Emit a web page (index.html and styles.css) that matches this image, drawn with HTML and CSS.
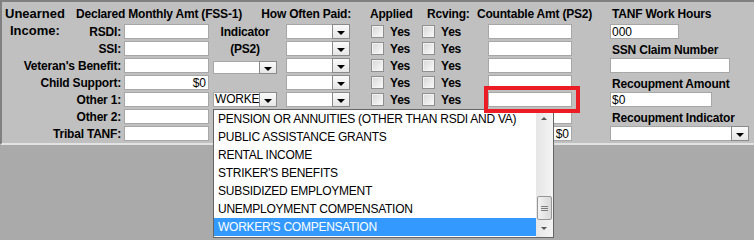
FILE: index.html
```html
<!DOCTYPE html>
<html lang="en">
<head>
  <meta charset="UTF-8">
  <title>Unearned Income</title>
  <link rel="stylesheet" href="styles.css">
</head>
<body>
  <div class="panel">
    <div class="row row-head">
      <div class="c1 title">Unearned</div>
      <div class="hd hd-declared">Declared Monthly Amt (FSS-1)</div>
      <div class="hd hd-often">How Often Paid:</div>
      <div class="hd hd-applied">Applied</div>
      <div class="hd hd-rcving">Rcving:</div>
      <div class="hd hd-count">Countable Amt (PS2)</div>
      <div class="hd hd-side">TANF Work Hours</div>
    </div>

    <div class="row">
      <div class="c1 title title-sub">Income:</div>
      <label class="lbl">RSDI:</label>
      <div class="c3"><input class="field w85" type="text"></div>
      <div class="c4 ind-hd">Indicator</div>
      <div class="c5"><div class="select w64"><span class="val"></span><span class="btn"></span></div></div>
      <div class="c6 yes"><input class="chk" type="checkbox">Yes</div>
      <div class="c7 yes"><input class="chk" type="checkbox">Yes</div>
      <div class="c8"><input class="field w84" type="text"></div>
      <div class="c9"><input class="field w69" type="text" value="000"></div>
    </div>

    <div class="row">
      <label class="lbl">SSI:</label>
      <div class="c3"><input class="field w85" type="text"></div>
      <div class="c4 ind-hd">(PS2)</div>
      <div class="c5"><div class="select w64"><span class="val"></span><span class="btn"></span></div></div>
      <div class="c6 yes"><input class="chk" type="checkbox">Yes</div>
      <div class="c7 yes"><input class="chk" type="checkbox">Yes</div>
      <div class="c8"><input class="field w84" type="text"></div>
      <div class="c9 side-lbl">SSN Claim Number</div>
    </div>

    <div class="row">
      <label class="lbl wide">Veteran's Benefit:</label>
      <div class="c3"><input class="field w85" type="text"></div>
      <div class="c4"><div class="select w64 short"><span class="val"></span><span class="btn"></span></div></div>
      <div class="c5"><div class="select w64"><span class="val"></span><span class="btn"></span></div></div>
      <div class="c6 yes"><input class="chk" type="checkbox">Yes</div>
      <div class="c7 yes"><input class="chk" type="checkbox">Yes</div>
      <div class="c8"><input class="field w84" type="text"></div>
      <div class="c9"><input class="field w120" type="text"></div>
    </div>

    <div class="row">
      <label class="lbl wide">Child Support:</label>
      <div class="c3"><input class="field w85 num" type="text" value="$0"></div>
      <div class="c5"><div class="select w64"><span class="val"></span><span class="btn"></span></div></div>
      <div class="c6 yes"><input class="chk" type="checkbox">Yes</div>
      <div class="c7 yes"><input class="chk" type="checkbox">Yes</div>
      <div class="c8"><input class="field w84" type="text"></div>
      <div class="c9 side-lbl">Recoupment Amount</div>
    </div>

    <div class="row">
      <label class="lbl wide">Other 1:</label>
      <div class="c3"><input class="field w85" type="text"></div>
      <div class="c4">
        <div class="select w64 open"><span class="val">WORKER'S COMPENSATION</span><span class="btn"></span>
          <div class="dropdown">
            <ul class="options">
              <li>PENSION OR ANNUITIES (OTHER THAN RSDI AND VA)</li>
              <li>PUBLIC ASSISTANCE GRANTS</li>
              <li>RENTAL INCOME</li>
              <li>STRIKER'S BENEFITS</li>
              <li>SUBSIDIZED EMPLOYMENT</li>
              <li>UNEMPLOYMENT COMPENSATION</li>
              <li class="selected">WORKER'S COMPENSATION</li>
            </ul>
            <div class="scrollbar">
              <span class="arrow up"></span>
              <div class="track"><span class="thumb"><i></i><i></i><i></i></span></div>
              <span class="arrow down"></span>
            </div>
          </div>
        </div>
      </div>
      <div class="c5"><div class="select w64"><span class="val"></span><span class="btn"></span></div></div>
      <div class="c6 yes"><input class="chk" type="checkbox">Yes</div>
      <div class="c7 yes"><input class="chk" type="checkbox">Yes</div>
      <div class="c8 marked"><input class="field w84" type="text"><span class="highlight"></span></div>
      <div class="c9"><input class="field w102" type="text" value="$0"></div>
    </div>

    <div class="row">
      <label class="lbl wide">Other 2:</label>
      <div class="c3"><input class="field w85" type="text"></div>
      <div class="c8"><input class="field w84" type="text"></div>
      <div class="c9 side-lbl">Recoupment Indicator</div>
    </div>

    <div class="row">
      <label class="lbl wide">Tribal TANF:</label>
      <div class="c3"><input class="field w85" type="text"></div>
      <div class="c8"><input class="field w84 num" type="text" value="$0"></div>
      <div class="c9"><div class="select w139"><span class="val"></span><span class="btn"></span></div></div>
    </div>
  </div>
</body>
</html>
```

FILE: styles.css
```css
html { min-height: 100%; background: #aaaaaa; }
body { margin: 0; min-height: 240px; background: #aaaaaa; font-family: "Liberation Sans", Arial, sans-serif; font-size: 12px; color: #000; }
.panel { background: #c0c0c0; border-top: 2px solid #808080; border-left: 2px solid #808080; border-bottom: 2px solid #e2e2e2; }
.row { display: grid; grid-template-columns: 70px 51px 88px 70px 85px 51px 53px 130px 1fr; height: 17px; }
.row-head { height: 22px; align-items: center; }

.c1 { grid-column: 1; }
.c3 { grid-column: 3; }
.c4 { grid-column: 4; }
.c5 { grid-column: 5; }
.c6 { grid-column: 6; }
.c7 { grid-column: 7; }
.c8 { grid-column: 8; }
.c9 { grid-column: 9; }

.title { font-size: 13px; font-weight: bold; padding-left: 3px; padding-top: 1px; }
.title-sub { padding-left: 8px; padding-top: 0; line-height: 13px; }

.hd, .lbl, .yes, .ind-hd, .side-lbl { font-weight: bold; letter-spacing: -0.2px; }
.hd { padding-top: 2px; white-space: nowrap; }
.hd-declared { grid-column: 2 / 4; padding-left: 4px; }
.hd-often { grid-column: 4 / 6; text-align: right; padding-right: 15px; }
.hd-applied { grid-column: 6; padding-left: 4px; }
.hd-rcving { grid-column: 7; padding-left: 10px; }
.hd-count { grid-column: 8; padding-left: 7px; }
.hd-side { grid-column: 9; padding-left: 12px; }

.lbl { grid-column: 2; text-align: right; padding-right: 2px; line-height: 16px; white-space: nowrap; }
.lbl.wide { grid-column: 1 / 3; }
.ind-hd { text-align: center; padding-left: 2px; width: 64px; line-height: 16px; }
.side-lbl { padding-left: 12px; line-height: 16px; padding-top: 1px; white-space: nowrap; }

.field { box-sizing: border-box; height: 15px; margin: 0; padding: 0 1px; border: 1px solid #a7a7a7; background: #fff; font-family: inherit; font-size: 12px; color: #000; outline: none; }
.c3 .field { margin-left: 1px; }
.c8 .field { margin-left: 18px; }
.c9 .field { margin-left: 10px; }
.field.num { text-align: right; padding-right: 2px; }
.w85 { width: 85px; }
.w84 { width: 84px; }
.w69 { width: 69px; }
.w120 { width: 120px; }
.w102 { width: 102px; }
.w64 { width: 64px; }
.w139 { width: 139px; }

.select { position: relative; box-sizing: border-box; display: flex; height: 15px; background: #fff; border: 1px solid #a7a7a7; border-right: none; }
.select.short { height: 13px; margin-top: 3px; }
.c4 .select { margin-left: 2px; }
.c5 .select { margin-left: 5px; }
.c9 .select { margin-left: 10px; }
.select .val { flex: 1; overflow: hidden; white-space: nowrap; line-height: 13px; padding-left: 1px; letter-spacing: -0.2px; }
.select .btn { position: relative; box-sizing: border-box; width: 18px; margin-top: -1px; margin-bottom: -1px; background: linear-gradient(#fafafa, #e6e6e6); border: 1px solid #8a8a8a; }
.select .btn::after { content: ""; position: absolute; left: 4px; bottom: 3px; border-left: 4px solid transparent; border-right: 4px solid transparent; border-top: 4px solid #000; }
.select.short .btn::after { bottom: 2px; }

.yes { display: flex; align-items: center; gap: 6px; padding-left: 5px; height: 15px; }
.chk { appearance: none; -webkit-appearance: none; box-sizing: border-box; width: 13px; height: 13px; margin: 0; border: 1px solid #8f8f8f; background: linear-gradient(135deg, #d6d6d6, #fbfbfb); box-shadow: inset 0 0 0 1px #f2f2f2; }

.dropdown { position: absolute; z-index: 5; left: -1px; top: 16px; box-sizing: border-box; width: 341px; height: 129px; display: flex; background: #fff; border: 1px solid #666; }
.options { list-style: none; margin: 0; padding: 0; flex: 1; }
.options li { height: 18px; line-height: 18px; padding-left: 4px; white-space: nowrap; letter-spacing: -0.25px; }
.options li.selected { background: #3399ff; color: #fff; }
.scrollbar { width: 17px; display: flex; flex-direction: column; background: linear-gradient(90deg, #e6e6e6, #f4f4f4); }
.arrow { position: relative; height: 17px; }
.arrow::after { content: ""; position: absolute; left: 5px; border-left: 3px solid transparent; border-right: 3px solid transparent; }
.arrow.up::after { top: 7px; border-bottom: 3px solid #555; }
.arrow.down::after { top: 7px; border-top: 3px solid #555; }
.track { flex: 1; display: flex; flex-direction: column; justify-content: flex-end; }
.thumb { box-sizing: border-box; height: 24px; margin: 0 1px; border: 1px solid #979797; border-radius: 2px; background: linear-gradient(90deg, #f2f2f2, #d9d9d9); display: flex; flex-direction: column; align-items: center; justify-content: center; gap: 1px; }
.thumb i { width: 7px; height: 1px; background: #7d7d7d; }

.marked { position: relative; }
.highlight { position: absolute; z-index: 6; left: 14px; top: -6px; width: 96px; height: 27px; box-sizing: border-box; border: 4px solid #ec1c24; }
```
